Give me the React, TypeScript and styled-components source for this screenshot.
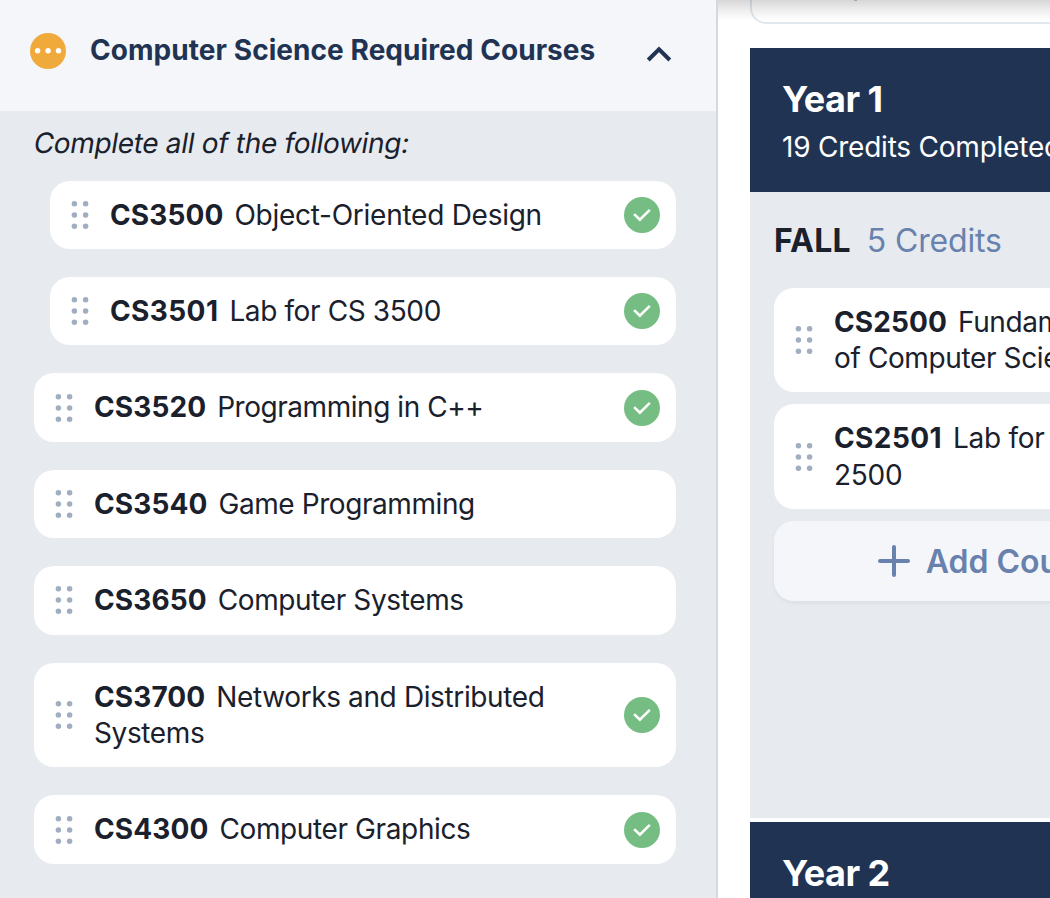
import React from "react";
import styled, { createGlobalStyle } from "styled-components";

const Global = createGlobalStyle`
  *, *::before, *::after { box-sizing: border-box; }
  html, body { margin: 0; padding: 0; }
  body {
    font-family: Inter, "Liberation Sans", sans-serif;
    font-size: 28px;
    line-height: 36.4px;
    color: #1a202c;
    background: #ffffff;
    overflow: hidden;
  }
`;

const Page = styled.div`
  display: flex;
  width: 1050px;
  height: 898px;
  overflow: hidden;
`;

const Sidebar = styled.aside`
  display: flex;
  flex-direction: column;
  flex: 0 0 718px;
  border-right: 2px solid #d5d8e3;
  background: #e7ebf0;
`;

const SectionHeader = styled.header`
  display: flex;
  align-items: center;
  height: 111px;
  flex: none;
  padding: 0 44px 9px 30px;
  background: #f5f6fa;
`;

const SectionTitle = styled.h2`
  flex: 1;
  margin: 0 0 2px 24px;
  font-size: 28px;
  font-weight: 700;
  line-height: 36px;
  letter-spacing: 0.06px;
  color: #213353;
  white-space: nowrap;
`;

const Icon = styled.svg`
  display: block;
  flex: none;
`;

const ChevronIcon = styled(Icon)`
  margin-top: 5px;
`;

const SectionBody = styled.div`
  display: flex;
  flex-direction: column;
  padding: 14.2px 40px 0 34px;
`;

const Instruction = styled.p`
  align-self: flex-start;
  margin: 0 0 19px;
  height: 36.4px;
  letter-spacing: -0.32px;
  white-space: nowrap;
  transform: skewX(-9.4deg);
`;

const CourseList = styled.div<{ $gap: number }>`
  display: flex;
  flex-direction: column;
  gap: ${(p) => p.$gap}px;
`;

const Card = styled.div<{ $indent?: boolean }>`
  display: flex;
  align-items: center;
  margin-left: ${(p) => (p.$indent ? 16 : 0)}px;
  padding: 0 16px 0 20px;
  border-radius: 20px;
  background: #ffffff;
`;

const CourseText = styled.div<{ $tracking: number }>`
  flex: 1;
  margin-left: 20px;
  padding: 16px 40px 16px 0;
  letter-spacing: ${(p) => p.$tracking}px;
`;

const Code = styled.span<{ $tracking: number }>`
  margin-right: 11px;
  font-weight: 700;
  letter-spacing: ${(p) => p.$tracking}px;
`;

const Plan = styled.main`
  position: relative;
  flex: 1;
  min-width: 0;
  padding-left: 32px;
  overflow: hidden;
`;

const TopShade = styled.div`
  position: absolute;
  top: 0;
  left: 0;
  right: 0;
  height: 20px;
  background: linear-gradient(rgba(0, 0, 0, 0.16), rgba(0, 0, 0, 0.08) 45%, rgba(0, 0, 0, 0));
`;

const FieldEdge = styled.div`
  width: 600px;
  height: 24px;
  margin-bottom: 24px;
  padding-left: 102px;
  border: 2px solid #e2e8f0;
  border-top: 0;
  border-radius: 0 0 0 16px;
`;

const FieldMark = styled.div`
  width: 3px;
  height: 1px;
  background: #c4c4c8;
`;

const Year = styled.section`
  width: 1200px;
  margin-bottom: 4px;
`;

const YearHeader = styled.header`
  height: 144px;
  padding: 28px 32px;
  background: #213353;
  color: #ffffff;
`;

const YearTitle = styled.h2`
  margin: 0;
  font-size: 36px;
  font-weight: 700;
  line-height: 46px;
  letter-spacing: -0.55px;
`;

const YearCredits = styled.div`
  margin-top: 7px;
  letter-spacing: -0.22px;
`;

const YearBody = styled.div`
  background: #e7ebf0;
`;

const Term = styled.div`
  width: 486px;
  height: 626px;
  padding: 24px 24px 0;
`;

const TermHeading = styled.div`
  display: flex;
  gap: 16px;
  height: 71.6px;
  font-size: 32px;
  line-height: 50px;
`;

const TermName = styled.span`
  font-weight: 700;
  letter-spacing: 0.2px;
`;

const TermCredits = styled.span`
  letter-spacing: -0.15px;
  color: #6882ad;
`;

const AddButton = styled.button`
  display: flex;
  align-items: center;
  justify-content: center;
  gap: 16px;
  height: 80px;
  border: 0;
  border-radius: 20px;
  padding: 0;
  background: #f5f6fa;
  box-shadow: 0 2px 4px rgba(33, 51, 83, 0.06);
  color: #6882ad;
  font: 600 32px/40px Inter, "Liberation Sans", sans-serif;
`;

const AddLabel = styled.span`
  padding-top: 2px;
`;

const DragHandle = () => (
  <Icon width="20" height="30" viewBox="0 0 20 30" fill="#a0aec0">
    {[3.8, 15, 26.2].map((y) =>
      [4.4, 15.6].map((x) => <circle key={`${x}-${y}`} cx={x} cy={y} r="2.75" />)
    )}
  </Icon>
);

const CheckBadge = () => (
  <Icon width="36" height="36" viewBox="0 0 36 36">
    <circle cx="18" cy="18" r="18" fill="#75bd82" />
    <path d="M10.1 17.1 L15.9 22.7 L25.8 12.9" fill="none" stroke="#ffffff" strokeWidth="2.6" />
  </Icon>
);

const ProgressBadge = () => (
  <Icon width="36" height="36" viewBox="0 0 36 36">
    <circle cx="18" cy="18" r="18" fill="#f0aa3c" />
    {[7.6, 18.1, 28.5].map((x) => (
      <circle key={x} cx={x} cy="17.8" r="2.7" fill="#ffffff" />
    ))}
  </Icon>
);

type Course = {
  code: string;
  name: React.ReactNode;
  done?: boolean;
  indent?: boolean;
  tracking?: number;
  codeTracking?: number;
};

const required: Course[] = [
  { code: "CS3500", name: "Object-Oriented Design", done: true, indent: true, tracking: -0.26 },
  { code: "CS3501", name: "Lab for CS 3500", done: true, indent: true, codeTracking: 0.4 },
  { code: "CS3520", name: "Programming in C++", done: true, tracking: -0.45 },
  { code: "CS3540", name: "Game Programming", tracking: -0.42 },
  { code: "CS3650", name: "Computer Systems" },
  { code: "CS3700", name: "Networks and Distributed Systems", done: true },
  { code: "CS4300", name: "Computer Graphics", done: true },
];

const fall: Course[] = [
  { code: "CS2500", name: <>Fundamentals<br />of Computer Science</> },
  { code: "CS2501", name: <>Lab for CS<br />2500</>, tracking: -0.25, codeTracking: 0.4 },
];

const CourseCard = ({
  code,
  name,
  done,
  indent,
  tracking = -0.38,
  codeTracking = 0.1,
}: Course) => (
  <Card $indent={indent}>
    <DragHandle />
    <CourseText $tracking={tracking}>
      <Code $tracking={codeTracking}>{code}</Code>
      {name}
    </CourseText>
    {done && <CheckBadge />}
  </Card>
);

export default function App() {
  return (
    <>
      <Global />
      <Page>
        <Sidebar>
          <SectionHeader>
            <ProgressBadge />
            <SectionTitle>Computer Science Required Courses</SectionTitle>
            <ChevronIcon width="26" height="18" viewBox="0 0 26 18">
              <path d="M2.2 15 L13 4.3 L23.8 15" fill="none" stroke="#213353" strokeWidth="4" />
            </ChevronIcon>
          </SectionHeader>
          <SectionBody>
            <Instruction>Complete all of the following:</Instruction>
            <CourseList $gap={28}>
              {required.map((c) => (
                <CourseCard key={c.code} {...c} />
              ))}
            </CourseList>
          </SectionBody>
        </Sidebar>
        <Plan>
          <FieldEdge>
            <FieldMark />
          </FieldEdge>
          <Year>
            <YearHeader>
              <YearTitle>Year 1</YearTitle>
              <YearCredits>19 Credits Completed</YearCredits>
            </YearHeader>
            <YearBody>
              <Term>
                <TermHeading>
                  <TermName>FALL</TermName>
                  <TermCredits>5 Credits</TermCredits>
                </TermHeading>
                <CourseList $gap={12}>
                  {fall.map((c) => (
                    <CourseCard key={c.code} {...c} />
                  ))}
                  <AddButton>
                    <Icon width="32" height="32" viewBox="0 0 32 32">
                      <path
                        d="M16 2 V30 M2 16 H30"
                        stroke="#6882ad"
                        strokeWidth="4"
                        strokeLinecap="round"
                      />
                    </Icon>
                    <AddLabel>Add Course</AddLabel>
                  </AddButton>
                </CourseList>
              </Term>
            </YearBody>
          </Year>
          <Year>
            <YearHeader>
              <YearTitle>Year 2</YearTitle>
            </YearHeader>
          </Year>
          <TopShade />
        </Plan>
      </Page>
    </>
  );
}
